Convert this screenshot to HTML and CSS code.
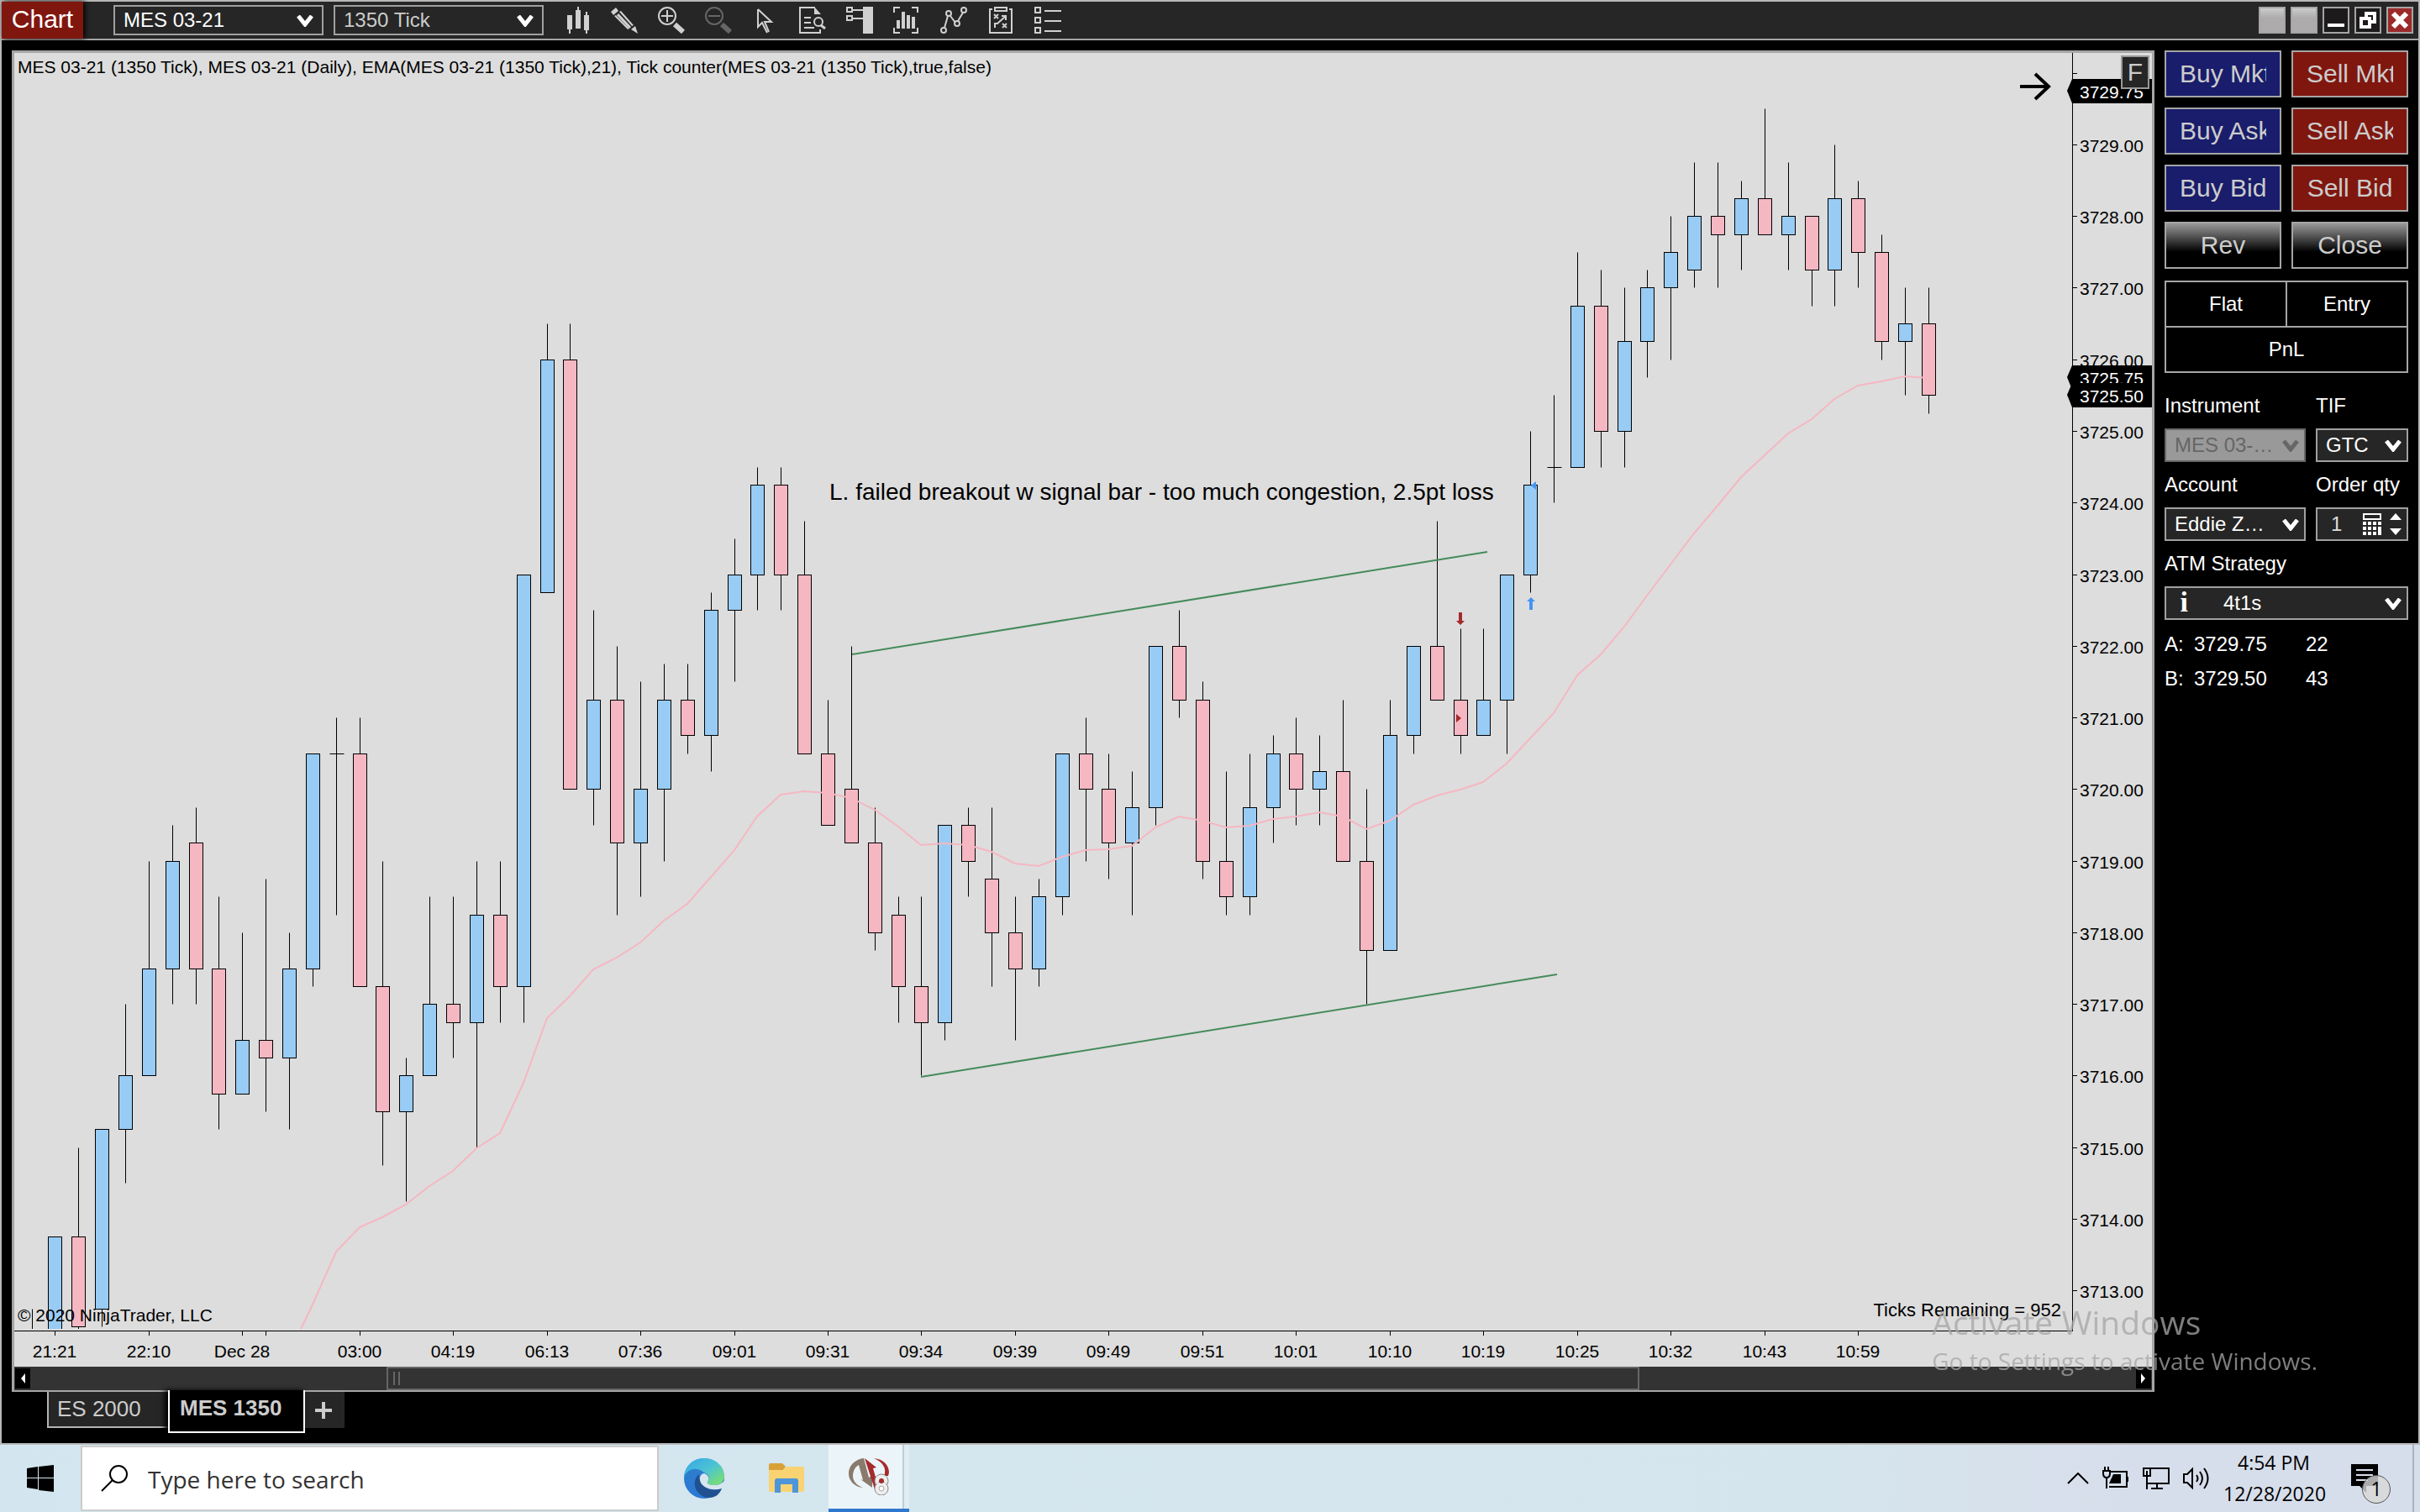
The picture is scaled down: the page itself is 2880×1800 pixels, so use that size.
FILE: index.html
```html
<!DOCTYPE html>
<html lang="en">
<head>
	<meta charset="utf-8">
	<title>Chart - MES 03-21</title>
	<link rel="stylesheet" href="styles.css">
</head>
<body>
	<div class="window">
		<header class="toolbar">
			<h1 class="title">Chart</h1>
			<div class="select select-bar">
				<select aria-label="Instrument"><option>MES 03-21</option></select>
				<svg class="chevron" viewBox="0 0 20 14"><path d="M2 1l8 10 8-10"/></svg>
			</div>
			<div class="select select-bar dim">
				<select aria-label="Interval"><option>1350 Tick</option></select>
				<svg class="chevron" viewBox="0 0 20 14"><path d="M2 1l8 10 8-10"/></svg>
			</div>
			<div class="tools">
				<button aria-label="Chart style"><svg viewBox="0 0 32 32"><path class="fill" d="M4 10h6v17H8v5H6v-5H4zM14 4h2V0h2v4h2v22h-6zM24 10h2V6h2v4h2v18h-2v4h-2v-4h-2z"/></svg></button>
				<button aria-label="Drawing tools"><svg viewBox="0 0 32 32"><path class="fill" d="M0 6l6-5 3 4-6 5zM24 27l5-4 3 9z"/><path class="fill" d="M4 11l2-1 16 16-2 1zM10 6l2-1 15 17-2 1z"/><path d="M8 9l15 16" stroke-width="3"/></svg></button>
				<button aria-label="Zoom in"><svg viewBox="0 0 32 32"><circle cx="11" cy="11" r="10"/><path d="M11 4v14M4 11h14"/><path d="M20 21l10 9" stroke-width="6"/></svg></button>
				<button aria-label="Zoom out" class="off"><svg viewBox="0 0 32 32"><circle cx="11" cy="11" r="10"/><path d="M4 11h14"/><path d="M20 21l10 9" stroke-width="6"/></svg></button>
				<button aria-label="Cursor"><svg viewBox="0 0 32 32"><path d="M7 3v21l5-5 6 12M7 3l16 15h-8l5 12"/></svg></button>
				<button aria-label="Data series"><svg viewBox="0 0 32 32"><path d="M25 27v4H1V1h18M6 13h8M6 19h8M6 25h12"/><path class="fill" d="M18 0l8 9h-8z"/><circle cx="23" cy="18" r="5"/><path d="M26 22l5 4" stroke-width="3"/></svg></button>
				<button aria-label="Chart trader"><svg viewBox="0 0 32 32"><path class="fill" d="M20 0h12v32H20z"/><path d="M1 1h6v5H1zM1 11h6v5H1zM7 4h13M7 14h13"/></svg></button>
				<button aria-label="Indicators"><svg viewBox="0 0 32 32"><path d="M1 7V1h7M22 1h7v6M29 25v6h-7M8 31H1v-6"/><path class="fill" d="M4 16h4v10H4zM10 6h4v20h-4zM16 10h4v16h-4zM22 12h4v14h-4z"/></svg></button>
				<button aria-label="Strategies"><svg viewBox="0 0 32 32"><path d="M5 25l4-14M12 11l6 8M21 17l6-10"/><circle cx="4" cy="28" r="3"/><circle cx="10" cy="8" r="3"/><circle cx="20" cy="20" r="3"/><circle cx="28" cy="4" r="3"/></svg></button>
				<button aria-label="Strategy performance"><svg viewBox="0 0 32 32"><path d="M6 3H3v28h26V3h-3M9 1h14v4H9zM8 9l5 5M13 9l-5 5M18 20l5 5M23 20l-5 5M9 25v-5h3l9-8M17 11h5v5"/></svg></button>
				<button aria-label="Properties"><svg viewBox="0 0 32 32"><path d="M1 1h6v6H1zM1 13h6v6H1zM1 25h6v6H1zM12 5h20M12 17h20M12 29h20"/></svg></button>
			</div>
			<div class="win-buttons">
				<button class="blank" aria-label="Link instrument"></button>
				<button class="blank" aria-label="Link interval"></button>
				<button aria-label="Minimize"><svg viewBox="0 0 32 32"><path d="M6 22h20" stroke-width="4"/></svg></button>
				<button aria-label="Restore"><svg viewBox="0 0 32 32"><path d="M14 13V8h10v10h-5M8 14h10v10H8z" stroke-width="4"/></svg></button>
				<button class="close" aria-label="Close window"><svg viewBox="0 0 32 32"><path d="M8 8l16 16M24 8L8 24" stroke-width="6"/></svg></button>
			</div>
		</header>

		<main class="workspace">
			<section class="chart-col">
				<div class="chart-frame">
					<div class="chart-area">
						<svg id="chart" viewBox="17 63 2544 1564" role="img" aria-label="MES 03-21 price chart"></svg>
						<button class="fixed-btn">F</button>
					</div>
					<div class="scrollbar">
						<button aria-label="Scroll left"><svg viewBox="0 0 18 24"><path d="M12 6v12L7 12z"/></svg></button>
						<div class="track"><div class="thumb"></div></div>
						<button aria-label="Scroll right"><svg viewBox="0 0 18 24"><path d="M6 6v12l5-6z"/></svg></button>
					</div>
				</div>
				<nav class="tabs">
					<button class="tab">ES 2000</button>
					<button class="tab active">MES 1350</button>
					<button class="tab add" aria-label="Add tab"><svg viewBox="0 0 20 20"><path d="M10 0v20M0 10h20"/></svg></button>
				</nav>
			</section>

			<aside class="trader">
				<div class="orders">
					<button class="buy"><span>Buy Mkt</span></button>
					<button class="sell"><span>Sell Mkt</span></button>
					<button class="buy"><span>Buy Ask</span></button>
					<button class="sell"><span>Sell Ask</span></button>
					<button class="buy"><span>Buy Bid</span></button>
					<button class="sell"><span>Sell Bid</span></button>
					<button class="plain"><span>Rev</span></button>
					<button class="plain"><span>Close</span></button>
				</div>
				<div class="position">
					<div>Flat</div>
					<div>Entry</div>
					<div class="pnl">PnL</div>
				</div>
				<div class="fields">
					<div class="field">
						<label for="instrument">Instrument</label>
						<div class="select disabled">
							<select id="instrument" disabled><option>MES 03-…</option></select>
							<svg class="chevron" viewBox="0 0 20 14"><path d="M2 1l8 10 8-10"/></svg>
						</div>
					</div>
					<div class="field">
						<label for="tif">TIF</label>
						<div class="select">
							<select id="tif"><option>GTC</option></select>
							<svg class="chevron" viewBox="0 0 20 14"><path d="M2 1l8 10 8-10"/></svg>
						</div>
					</div>
					<div class="field">
						<label for="account">Account</label>
						<div class="select">
							<select id="account"><option>Eddie Z…</option></select>
							<svg class="chevron" viewBox="0 0 20 14"><path d="M2 1l8 10 8-10"/></svg>
						</div>
					</div>
					<div class="field">
						<label for="qty">Order qty</label>
						<div class="qty">
							<input id="qty" type="text" value="1">
							<svg class="calc" viewBox="0 0 22 26"><path fill="none" stroke="#fff" stroke-width="2" d="M1 1h20v6H1z"/><path fill="#fff" d="M0 10h4v4H0zM6 10h4v4H6zM12 10h4v4h-4zM18 10h4v4h-4zM0 16h4v4H0zM6 16h4v4H6zM12 16h4v4h-4zM0 22h4v4H0zM6 22h4v4H6zM12 22h4v4h-4zM18 16h4v10h-4z"/></svg>
							<svg class="spin" viewBox="0 0 14 26"><path fill="#fff" d="M7 0l7 8H0zM7 26l7-8H0z"/></svg>
						</div>
					</div>
					<div class="field wide">
						<label for="atm">ATM Strategy</label>
						<div class="select atm">
							<span class="info">i</span>
							<select id="atm"><option>4t1s</option></select>
							<svg class="chevron" viewBox="0 0 20 14"><path d="M2 1l8 10 8-10"/></svg>
						</div>
					</div>
				</div>
				<table class="quotes">
					<tr><th>A:</th><td class="price">3729.75</td><td>22</td></tr>
					<tr><th>B:</th><td class="price">3729.50</td><td>43</td></tr>
				</table>
			</aside>
		</main>
	</div>

	<div class="watermark">
		<p class="big">Activate Windows</p>
		<p>Go to Settings to activate Windows.</p>
	</div>

	<footer class="taskbar">
		<button class="start" aria-label="Start"><svg viewBox="0 0 32 32"><path d="M0 4l13-2v13H0zM14 2l18-2v15H14zM0 16h13v13L0 27zM14 16h18v16l-18-2z"/></svg></button>
		<div class="search">
			<svg viewBox="0 0 32 32"><circle cx="21" cy="11" r="10"/><path d="M14 18L1 31"/></svg>
			<input type="text" placeholder="Type here to search" aria-label="Search">
		</div>
		<button class="task" aria-label="Edge">
			<svg width="48" height="48" viewBox="0 0 48 48">
				<defs>
					<linearGradient id="edgeTop" x1="0" y1="0" x2="1" y2="1"><stop offset="0" stop-color="#35a5e8"/><stop offset=".5" stop-color="#4cc3d4"/><stop offset="1" stop-color="#82e45c"/></linearGradient>
					<linearGradient id="edgeBody" x1="0" y1="0" x2="0" y2="1"><stop offset="0" stop-color="#2f7fc8"/><stop offset="1" stop-color="#2a78d6"/></linearGradient>
				</defs>
				<circle cx="24" cy="24" r="24" fill="url(#edgeBody)"/>
				<path fill="url(#edgeTop)" d="M0 22C1 9 11 0 24 0c14 0 24 10 24 21 0 7-5 11-12 11-6 0-9-2-8-4 3-4 2-9-4-11C14 9 4 13 0 22z"/>
				<path fill="#20508f" d="M18 19c-7 5-7 17 0 23 6 6 14 6 20 3 3-2 6-6 7-9-13 5-27-2-27-17z"/>
				<path fill="#d5e6ee" d="M24 18c5 2 7 6 4 10-1 2 2 4 8 4 5 0 9-2 12-5 0 5-1 7-3 9-13 4-25-2-26-10-1-4 2-8 5-8z"/>
			</svg>
		</button>
		<button class="task" aria-label="File Explorer">
			<svg width="42" height="36" viewBox="0 0 42 36"><path fill="#d9a036" d="M0 2q0-2 2-2h14l4 4-3 4H0z"/><path fill="#f9d372" d="M0 8h17l4-4h19q2 0 2 2v26q0 2-2 2H2q-2 0-2-2z"/><path fill="#4e95da" d="M7 35V21q0-3 3-3h22q3 0 3 3v14h-7V25H14v10z"/></svg>
		</button>
		<button class="task running" aria-label="NinjaTrader">
			<svg width="48" height="44" viewBox="0 0 48 44">
				<path fill="#8a7a6c" d="M17 0C6 2 0 10 0 18c0 9 7 16 17 17C9 32 5 27 5 21 5 15 8 10 12 8l5 18-3-1 14 10V20l-4 3-6-23z"/>
				<path fill="#a62a2c" d="M19 0l14 11-4 1 6 21-4 4zM30 0c11 1 18 8 18 17l-1 4h-5C46 12 40 4 30 0z"/>
				<g fill="#eee" stroke="#888"><circle cx="39" cy="27" r="8"/><circle cx="39" cy="36" r="8"/></g>
				<path fill="#eee" d="M34 29h10v5H34z"/><circle cx="39" cy="27" r="3" fill="#a62a2c"/><circle cx="39" cy="36" r="3" fill="#fff" stroke="#aaa"/>
			</svg>
		</button>
		<div class="tray">
			<svg width="26" height="14" viewBox="0 0 26 14"><path d="M1 13L13 1l12 12"/></svg>
			<svg width="32" height="28" viewBox="0 0 32 28"><path d="M10 6h19v18H8M30 12v6M3 0v5M7 0v5M1 5h8v3q0 5-4 5t-4-5zM5 13v13"/><path class="solid" d="M13 9h9v11H8z"/></svg>
			<svg width="32" height="26" viewBox="0 0 32 26"><path d="M9 1h22v18H6M1 1h8v9H1zM5 4v22M17 19v6M10 25h14"/></svg>
			<svg width="32" height="28" viewBox="0 0 32 28"><path d="M1 9h4l6-6v22l-6-6H1zM16 10q3 4 0 8M20 6q6 8 0 16M25 2q9 12 0 24"/></svg>
			<div class="clock"><span>4:54 PM</span><span>12/28/2020</span></div>
			<button class="notice" aria-label="Notifications">
				<svg width="32" height="34" viewBox="0 0 32 34"><path class="solid" d="M0 0h32v26H18v8l-8-8H0z"/><path stroke="#d7deeb" d="M6 7h20M6 13h20M6 19h14"/></svg>
				<span class="badge">1</span>
			</button>
		</div>
	</footer>
	<script src="chart.js"></script>
</body>
</html>
```
FILE: styles.css
```css
*{
	margin:0;
	padding:0;
	box-sizing:border-box;
}
body{
	display:flex;
	flex-direction:column;
	height:100vh;
	background:#000;
	color:#fff;
	font:24px/28px "Liberation Sans",Arial,sans-serif;
	overflow:hidden;
}
button,input,select{
	font:inherit;
	color:inherit;
	border:0;
	border-radius:0;
	background:none;
	outline:none;
}
svg{
	display:block;
}
.window{
	flex:1;
	min-height:0;
	display:flex;
	flex-direction:column;
	border:2px solid #b8b8b8;
}

/* toolbar */
.toolbar{
	display:flex;
	align-items:center;
	height:46px;
	background:#262626;
	border-bottom:2px solid #a5a5a5;
}
.title{
	width:97px;
	height:44px;
	margin-right:36px;
	background:#80170f;
	box-shadow:2px 0 6px #000;
	font-size:30px;
	font-weight:normal;
	line-height:42px;
	text-align:center;
}
.select{
	position:relative;
	display:flex;
	height:40px;
	background:#262626;
	border:2px solid #a0a0a0;
}
.select select{
	flex:1;
	width:100%;
	padding:0 30px 0 10px;
	appearance:none;
}
.chevron{
	position:absolute;
	right:6px;
	top:12px;
	width:20px;
	height:14px;
	fill:none;
	stroke:#fff;
	stroke-width:5;
	pointer-events:none;
}
.select-bar{
	width:250px;
	height:36px;
	margin-right:12px;
}
.select-bar .chevron{
	right:10px;
	top:10px;
}
.dim select{
	color:#ccc;
}
.tools{
	display:flex;
	gap:24px;
	margin-left:12px;
}
.tools button{
	width:32px;
	height:32px;
	color:#d0d0d0;
}
.tools .off{
	color:#666;
}
.tools svg,
.win-buttons svg{
	width:100%;
	height:100%;
	fill:none;
	stroke:currentColor;
	stroke-width:2;
}
.tools .fill{
	fill:currentColor;
	stroke:none;
}
.win-buttons{
	display:flex;
	gap:6px;
	margin:0 6px 0 auto;
}
.win-buttons button{
	width:32px;
	height:32px;
	background:#1c1a1b;
	border:2px solid #a5a5a5;
}
.win-buttons svg{
	width:32px;
	height:32px;
	margin:-2px;
}
.win-buttons .blank{
	background:linear-gradient(#ccc,#adabab 40%);
}
.win-buttons .close{
	background:#9c2a2a;
}

/* chart */
.workspace{
	flex:1;
	min-height:0;
	display:grid;
	grid-template-columns:minmax(0,1fr) 290px;
	gap:12px;
	padding:12px;
}
.chart-col{
	display:flex;
	flex-direction:column;
	min-height:0;
}
.chart-frame{
	flex:1;
	min-height:0;
	display:flex;
	flex-direction:column;
	border:3px solid #a5a5a5;
	border-bottom-width:2px;
}
.chart-area{
	position:relative;
	flex:1;
	min-height:0;
	background:#ddd;
}
#chart{
	width:100%;
	height:100%;
	font-size:21px;
}
#chart .up{
	fill:#98ccf5;
	stroke:#000;
}
#chart .down{
	fill:#f5b7c2;
	stroke:#000;
}
#chart .line{
	stroke:#000;
	fill:none;
}
#chart .ema{
	fill:none;
	stroke:#f5b7c2;
	stroke-width:2;
}
#chart .trend{
	stroke:#458b5b;
	stroke-width:2;
}
#chart .buy-mark{
	fill:#4394f5;
}
#chart .sell-mark{
	fill:#a52a2a;
}
#chart .center{
	text-anchor:middle;
}
#chart .ticks-left{
	font-size:22px;
	text-anchor:end;
}
#chart .tag{
	fill:#fff;
}
#chart .note{
	font-size:28px;
}
#chart .arrow{
	fill:none;
	stroke:#000;
	stroke-width:4;
}
.fixed-btn{
	position:absolute;
	top:3px;
	right:3px;
	width:34px;
	height:40px;
	background:#262626;
	border:2px solid #999;
	color:#ccc;
	font-size:30px;
	line-height:34px;
}
.scrollbar{
	display:flex;
	height:28px;
	padding:0 1px;
	background:#333;
}
.scrollbar button{
	width:18px;
	height:24px;
	margin-top:2px;
	background:#000;
	fill:#fff;
}
.track{
	flex:1;
}
.thumb{
	width:59.5%;
	height:28px;
	margin-left:16.9%;
	border:2px solid #666;
	background:linear-gradient(#666,#666) 6px 4px/2px 16px no-repeat,linear-gradient(#666,#666) 12px 4px/2px 16px no-repeat;
}
.tabs{
	display:flex;
	align-items:flex-start;
	height:49px;
	padding-left:42px;
}
.tab{
	height:43px;
	width:144px;
	padding-left:10px;
	background:#262626;
	border:solid #b4b4b4;
	border-width:0 0 2px 2px;
	color:#ccc;
	font-size:26px;
	line-height:39px;
	text-align:left;
}
.tab.active{
	position:relative;
	width:163px;
	height:51px;
	margin-top:-2px;
	padding:0 0 6px 12px;
	background:#000;
	border:solid #fff;
	border-width:0 2px 2px;
	box-shadow:-4px 0 6px #000;
	font-weight:bold;
}
.tab.add{
	width:47px;
	padding:0 0 0 12px;
	border:0;
}
.tab.add svg{
	width:20px;
	height:20px;
	stroke:#ccc;
	stroke-width:4;
}

/* order entry */
.orders{
	display:grid;
	grid-template-columns:repeat(2,minmax(0,1fr));
	gap:12px;
}
.orders button{
	height:56px;
	padding:0 16px;
	border:2px solid #a5a5a5;
	color:#ccc;
	font-size:30px;
	line-height:36px;
}
.orders span{
	display:block;
	overflow:hidden;
	white-space:nowrap;
}
.orders .buy{
	background:#191d6b;
}
.orders .sell{
	background:#80170f;
}
.orders .plain{
	background:linear-gradient(#999,#000 65%);
}
.position{
	display:grid;
	grid-template-columns:1fr 1fr;
	gap:2px;
	margin:14px 0 28px;
	background:#a5a5a5;
	border:2px solid #a5a5a5;
	text-align:center;
	line-height:52px;
}
.position div{
	background:#000;
}
.position .pnl{
	grid-column:span 2;
}
.fields{
	display:grid;
	grid-template-columns:168px 1fr;
	gap:16px 12px;
}
.field.wide{
	grid-column:span 2;
}
.field label{
	display:block;
	height:38px;
	line-height:22px;
	white-space:nowrap;
}
.disabled{
	background:#999;
	border-color:#666;
}
.disabled select{
	color:#666;
	opacity:1;
}
.disabled .chevron{
	stroke:#666;
}
.qty{
	display:flex;
	align-items:center;
	height:40px;
	padding:0 6px 0 16px;
	background:#262626;
	border:2px solid #a0a0a0;
	color:#ddd;
}
.qty input{
	flex:1;
	width:0;
}
.calc{
	width:22px;
	height:26px;
	margin-right:10px;
}
.spin{
	width:14px;
	height:26px;
}
.atm select{
	padding-left:42px;
}
.info{
	width:26px;
	font:bold 34px/34px "Liberation Serif",serif;
	text-align:right;
}
.quotes{
	margin-top:8px;
	border-collapse:collapse;
}
.quotes th{
	width:35px;
	height:41px;
	font-weight:normal;
	text-align:left;
}
.quotes .price{
	width:133px;
}

.watermark{
	position:fixed;
	right:122px;
	bottom:160px;
	color:rgba(165,165,165,.76);
	font:28px/40px "Open Sans",sans-serif;
	pointer-events:none;
}
.watermark .big{
	font-size:39px;
	line-height:52px;
}

/* windows taskbar */
.taskbar{
	display:flex;
	align-items:stretch;
	height:80px;
	background:linear-gradient(90deg,#d3e6ef,#d5e5ed 75%,#d7deeb 88%);
	color:#000;
	font:23px/37px "Open Sans",sans-serif;
}
.start{
	width:96px;
	padding-left:32px;
}
.start svg{
	width:32px;
	height:32px;
}
.search{
	display:flex;
	align-items:center;
	width:688px;
	margin:1px 6px 1px 0;
	padding:0 22px;
	background:#fff;
	border:2px solid #ccc;
}
.search svg{
	width:32px;
	height:32px;
	fill:none;
	stroke:#000;
	stroke-width:2;
}
.search input{
	flex:1;
	padding:2px 0 0 24px;
	font-size:28px;
}
.search input::placeholder{
	color:#333;
	opacity:1;
}
.task{
	display:flex;
	align-items:center;
	justify-content:center;
	width:96px;
	margin-right:2px;
}
.running{
	background:linear-gradient(90deg,#ebf4f8 88px,#bccfd8 88px,#bccfd8 90px,#e0edf4 90px);
	border-bottom:4px solid #2f78d0;
}
.tray{
	display:flex;
	align-items:center;
	gap:16px;
	margin:0 7px 0 auto;
	padding-right:41px;
	border-right:2px solid #a9b2c0;
}
.tray svg{
	fill:none;
	stroke:#000;
	stroke-width:2;
}
.tray .solid{
	fill:#000;
	stroke:none;
}
.clock{
	width:120px;
	margin-right:14px;
	text-align:center;
	white-space:nowrap;
}
.clock span{
	display:block;
}
.notice{
	position:relative;
	margin-left:2px;
}
.badge{
	position:absolute;
	left:13px;
	top:13px;
	width:34px;
	height:34px;
	background:rgba(215,215,215,.8);
	border:1px solid #555;
	border-radius:50%;
	line-height:31px;
	text-align:center;
}
```
FILE: chart.js
```javascript
var svg = document.getElementById('chart');
var NS = 'http://www.w3.org/2000/svg';

// [direction, high, body top, body bottom, low] in ticks (0.25) above 3721.00
var bars = [
	['u',-29,-29,-37,-37],['d',-24,-29,-34,-35],['u',-23,-23,-33,-34],['u',-16,-20,-23,-26],
	['u',-8,-14,-20,-20],['u',-6,-8,-14,-16],['d',-5,-7,-14,-16],['d',-10,-14,-21,-23],
	['u',-12,-18,-21,-21],['d',-9,-18,-19,-22],['u',-12,-14,-19,-23],['u',-2,-2,-14,-15],
	['d',0,-2,-2,-11],['d',0,-2,-15,-15],['d',-8,-15,-22,-25],['u',-19,-20,-22,-27],
	['u',-10,-16,-20,-20],['d',-10,-16,-17,-19],['u',-8,-11,-17,-24],['d',-8,-11,-15,-17],
	['u',8,8,-15,-17],['u',22,20,7,7],['d',22,20,-4,-4],['u',6,1,-4,-6],
	['d',4,1,-7,-11],['u',2,-4,-7,-10],['u',3,1,-4,-8],['d',3,1,-1,-2],
	['u',7,6,-1,-3],['u',10,8,6,2],['u',14,13,8,6],['d',14,13,8,6],
	['d',11,8,-2,-2],['d',1,-2,-6,-6],['d',4,-4,-7,-7],['d',-5,-7,-12,-13],
	['d',-10,-11,-15,-17],['d',-10,-15,-17,-20],['u',-6,-6,-17,-18],['d',-5,-6,-8,-10],
	['d',-5,-9,-12,-15],['d',-10,-12,-14,-18],['u',-9,-10,-14,-15],['u',-2,-2,-10,-11],
	['d',0,-2,-4,-8],['d',-2,-4,-7,-9],['u',-3,-5,-7,-11],['u',4,4,-5,-6],
	['d',6,4,1,0],['d',2,1,-8,-9],['d',-3,-8,-10,-11],['u',-2,-5,-10,-11],
	['u',-1,-2,-5,-7],['d',0,-2,-4,-6],['u',-1,-3,-4,-6],['d',1,-3,-8,-8],
	['d',-4,-8,-13,-16],['u',1,-1,-13,-13],['u',4,4,-1,-2],['d',11,4,1,1],
	['d',5,1,-1,-2],['u',5,1,-1,-1],['u',8,8,1,-2],['u',16,13,8,7],
	['u',18,14,14,12],['u',26,23,14,14],['d',25,23,16,14],['u',24,21,16,14],
	['u',25,24,21,19],['u',28,26,24,20],['u',31,28,25,24],['d',31,28,27,24],
	['u',30,29,27,25],['d',34,29,27,27],['u',31,28,27,25],['d',28,28,25,23],
	['u',32,29,25,23],['d',30,29,26,24],['d',27,26,21,20],['u',24,22,21,18],
	['d',24,22,18,17]
];

// EMA(21), starts at bar 10
var ema = [
	1612,1553,1490,1461,1449,1434,1412,1394,1367,1349,1289,1212,1186,1154,1140,1122,1096,1076,
	1044,1012,972,946,942,944,950,964,984,1006,1004,1006,1014,1028,1031,1020,1012,1011,1007,
	985,972,977,985,983,975,972,967,972,987,977,958,947,940,931,909,879,849,804,779,746,709,
	672,635,602,568,542,516,499,475,459,454,448,450
];

var times = {
	0:'21:21',4:'22:10',8:'Dec 28',9:'',13:'03:00',17:'04:19',21:'06:13',25:'07:36',29:'09:01',
	33:'09:31',37:'09:34',41:'09:39',45:'09:49',49:'09:51',53:'10:01',57:'10:10',61:'10:19',
	65:'10:25',69:'10:32',73:'10:43',77:'10:59'
};

function add(tag, attrs, text, parent){
	var el = document.createElementNS(NS, tag);
	for(var k in attrs){
		el.setAttribute(k, attrs[k]);
	}
	if(text) el.textContent = text;
	(parent || svg).appendChild(el);
	return el;
}
function barX(n){
	return Math.round(65.3 + n*27.87);
}
function priceY(p){
	return Math.round(171.95 + (3729 - p)*85.27);
}
function tickY(t){
	return priceY(3721 + t/4) + 0.5;
}
function priceTag(y, label){
	add('path', {d:'M2561 '+(y-14)+'H2466L2460 '+y+'L2466 '+(y+15)+'H2561z'});
	add('text', {x:2475, y:y+9, 'class':'tag'}, label);
}

// plot area
var clip = add('clipPath', {id:'plot'});
add('rect', {x:17, y:63, width:2449, height:1519}, '', clip);
var plot = add('g', {'clip-path':'url(#plot)'});

add('path', {'class':'line', d:'M38.5 '+tickY(-33)+'V1600'}, '', plot);
bars.forEach(function(b, n){
	var x = barX(n) + 0.5;
	var top = tickY(b[2]), bottom = tickY(b[3]);
	add('path', {'class':'line', d:'M'+x+' '+tickY(b[1])+'V'+top+'M'+x+' '+bottom+'V'+tickY(b[4])}, '', plot);
	if(top == bottom){
		add('path', {'class':'line', d:'M'+(x-8)+' '+top+'h17'}, '', plot);
	}else{
		add('rect', {'class':b[0]=='u' ? 'up' : 'down', x:x-8, y:top, width:16, height:bottom-top}, '', plot);
	}
});
add('polyline', {'class':'ema', points:ema.map(function(y, i){
	return barX(i+10) + ',' + y;
}).join(' ')}, '', plot);

add('path', {'class':'trend', d:'M1014 779L1770 657M1096 1282L1853 1160'});

// executions
add('path', {'class':'sell-mark', d:'M1736 729h4v10h3l-5 5-5-5h3zM1733 850l6 5-6 5z'});
add('path', {'class':'buy-mark', d:'M1820 726h4v-10h3l-5-5-5 5h3zM1828 573l-6 5 6 5z'});

// axes
add('path', {'class':'line', d:'M2466.5 63V1584.5M17 1584.5H2467'});
for(var p=3730; p>=3713; p--){
	var y = priceY(p);
	add('path', {'class':'line', d:'M2467 '+(y+0.5)+'h5'});
	if(p < 3730){
		add('text', {x:2475, y:y+9}, p.toFixed(2));
	}
}
for(var n in times){
	add('path', {'class':'line', d:'M'+(barX(+n)+0.5)+' 1585v5'});
	add('text', {x:barX(+n), y:1616, 'class':'center'}, times[n]);
}
priceTag(108, '3729.75');
priceTag(449, '3725.75');
priceTag(470, '3725.50');

// texts
add('text', {x:21, y:87}, 'MES 03-21 (1350 Tick), MES 03-21 (Daily), EMA(MES 03-21 (1350 Tick),21), Tick counter(MES 03-21 (1350 Tick),true,false)');
add('text', {x:987, y:595, 'class':'note'}, 'L. failed breakout w signal bar - too much congestion, 2.5pt loss');
add('text', {x:21, y:1573}, '© 2020 NinjaTrader, LLC');
add('text', {x:2453, y:1567, 'class':'ticks-left'}, 'Ticks Remaining = 952');
add('path', {'class':'arrow', d:'M2404 103h34M2422 88l16 15-16 15'});
```
